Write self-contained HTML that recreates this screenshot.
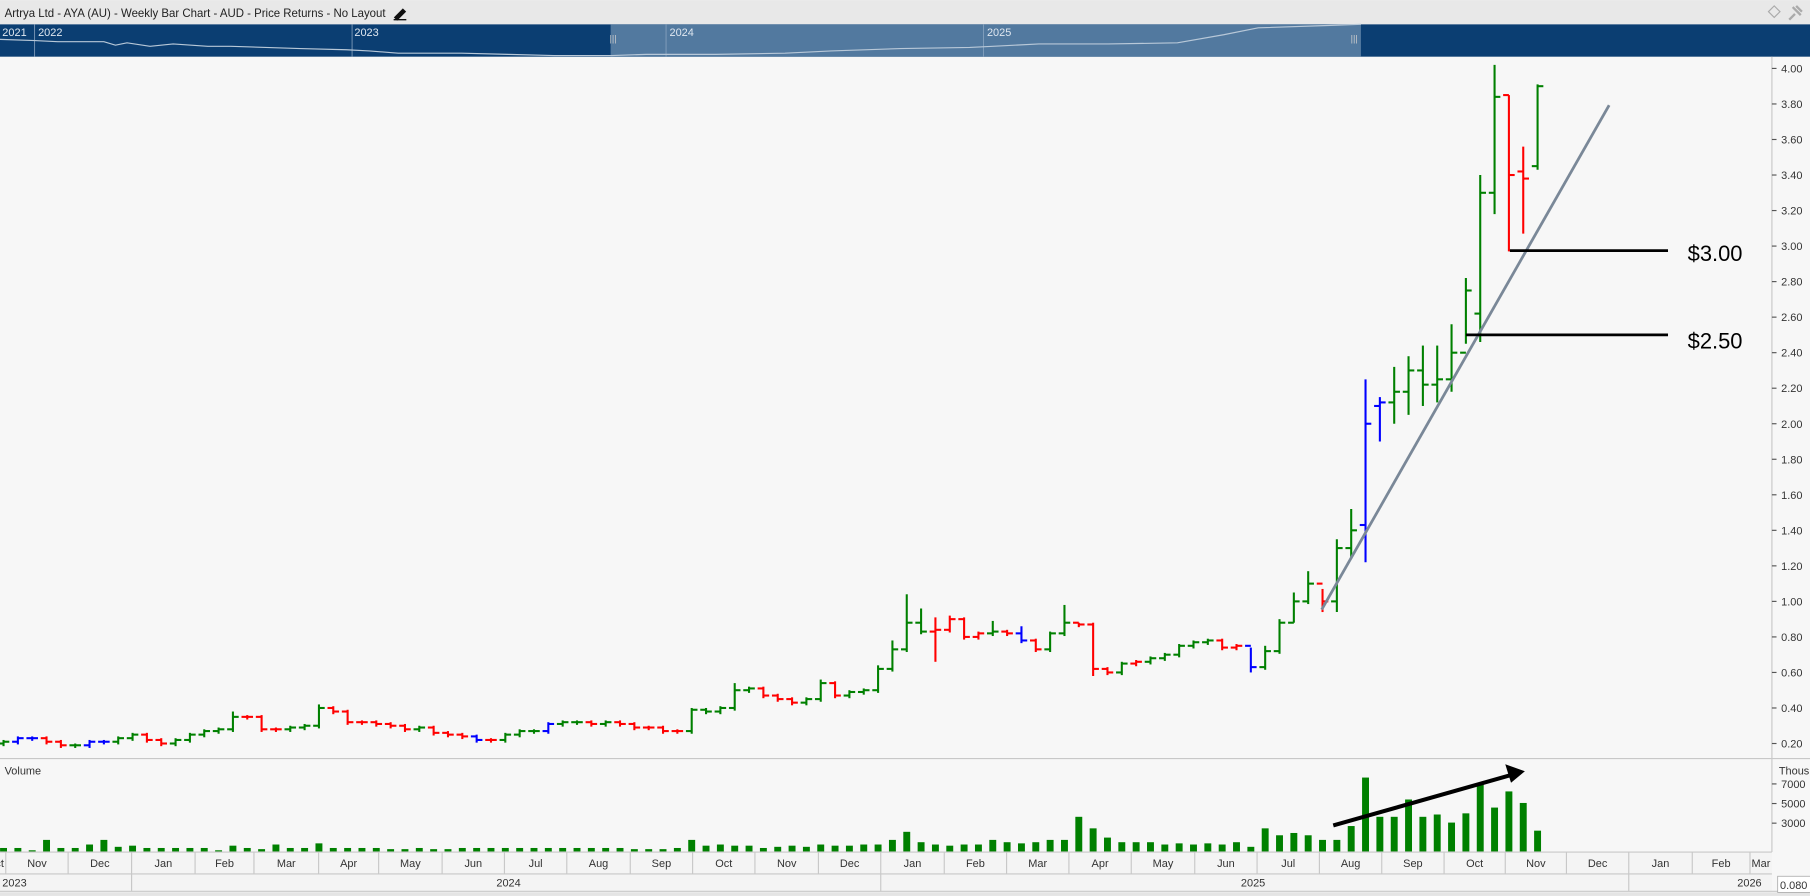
<!DOCTYPE html>
<html><head><meta charset="utf-8"><style>
html,body{margin:0;padding:0;background:#f7f7f7;overflow:hidden}
svg{display:block;font-family:"Liberation Sans",sans-serif}
</style></head><body>
<svg id="s" width="1810" height="896" viewBox="0 0 1568 776" xmlns="http://www.w3.org/2000/svg">
<rect x="0" y="0" width="1568" height="776" fill="#f7f7f7"/>
<rect x="0" y="0" width="1568" height="21" fill="#e8e8e8"/>
<text x="4" y="14.5" font-size="10.5" fill="#222" textLength="330" lengthAdjust="spacingAndGlyphs">Artrya Ltd - AYA (AU) - Weekly Bar Chart - AUD - Price Returns - No Layout</text>
<path d="M342 15 L349 8 L351 10 L344 17 Z M341 17 L352 17" stroke="#111" stroke-width="1.2" fill="#111"/>
<path d="M1537 5 L1542 10 L1537 15 L1532 10 Z" fill="none" stroke="#aaa"/>
<path d="M1553 6 L1560 13 M1556 5 L1561 10 M1555 12 L1550 17" stroke="#aaa" stroke-width="2"/>
<rect x="0" y="21" width="1568" height="28" fill="#0b3e72"/>
<rect x="529" y="21" width="650" height="28" fill="#52799f"/>
<g stroke="#8aa4c0" stroke-width="0.7"><line x1="30" y1="21" x2="30" y2="49"/><line x1="305" y1="21" x2="305" y2="49"/><line x1="577" y1="21" x2="577" y2="49"/><line x1="852" y1="21" x2="852" y2="49"/></g>
<g font-size="9.5" fill="#dfe7f0"><text x="2" y="31">2021</text><text x="33" y="31">2022</text><text x="307" y="31">2023</text><text x="580" y="31">2024</text><text x="855" y="31">2025</text></g>
<polyline fill="none" stroke="#b8c8d8" stroke-width="1" points="0,34 30,35 50,36 90,36 100,39 110,37 130,40 150,38 180,40 200,40 230,41 260,42 300,43 320,44 345,46 400,46 440,47 480,48 530,48 560,47 620,47 680,46 720,44 780,42 840,41 860,40 900,38 960,38 1020,37 1060,30 1090,24 1150,22 1179,21"/>
<text x="528" y="36" font-size="8" fill="#ccc">|||</text><text x="1170" y="36" font-size="8" fill="#ccc">|||</text>
<line x1="1535" y1="49" x2="1535" y2="738" stroke="#c8c8c8" stroke-width="1"/>
<line x1="0" y1="657" x2="1568" y2="657" stroke="#c8c8c8" stroke-width="1"/>
<text x="4" y="671" font-size="9.5" fill="#333">Volume</text>
<g id="ax" font-size="9.5" fill="#333"></g>
<g id="bars"></g>
<g id="vol" fill="#008000"></g>
<line x1="1145" y1="528" x2="1394" y2="91" stroke="#7a8898" stroke-width="2.4"/>
<line x1="1308" y1="217" x2="1445" y2="217" stroke="#000" stroke-width="2.4"/>
<line x1="1270" y1="290" x2="1445" y2="290" stroke="#000" stroke-width="2.4"/>
<text x="1462" y="226" font-size="19" fill="#000">$3.00</text>
<text x="1462" y="302" font-size="19" fill="#000">$2.50</text>
<line x1="1155" y1="715" x2="1310" y2="671" stroke="#000" stroke-width="3.5"/>
<path d="M1321 668 L1304 662 L1309 678 Z" fill="#000"/>
<rect x="0" y="738" width="1535" height="38" fill="#f4f4f4"/>
<line x1="0" y1="738" x2="1535" y2="738" stroke="#c8c8c8"/>
<line x1="0" y1="757" x2="1535" y2="757" stroke="#c8c8c8"/>
<line x1="0" y1="772" x2="1568" y2="772" stroke="#c8c8c8"/>
<rect x="0" y="773" width="1568" height="3" fill="#e4e4e4"/>
<g id="tx" font-size="9.5" fill="#333"></g>
<rect x="1540" y="759" width="30" height="14" fill="#fff" stroke="#aaa" stroke-width="0.7"/>
<text x="1542" y="770" font-size="9.5" fill="#333">0.080</text>
</svg>
<script>
var NS="http://www.w3.org/2000/svg";
function el(p,t,a,txt){var e=document.createElementNS(NS,t);for(var k in a)e.setAttribute(k,a[k]);if(txt!=null)e.textContent=txt;p.appendChild(e);return e;}
function Y(p){return 644-(p-0.2)*153.9;}
var ax=document.getElementById('ax');
for(var i=0;i<=19;i++){var p=0.2+i*0.2;var y=Y(p);el(ax,'line',{x1:1535,y1:y,x2:1539,y2:y,stroke:'#555','stroke-width':1});el(ax,'text',{x:1543,y:y+3.5},p.toFixed(2));}
el(ax,'text',{x:1541,y:671},'Thous');
[[7000,679],[5000,696],[3000,713]].forEach(function(a){el(ax,'line',{x1:1535,y1:a[1],x2:1539,y2:a[1],stroke:'#555'});el(ax,'text',{x:1543,y:a[1]+3.5},a[0]);});
var D=[[.20,'g'],[.21,'g'],[.23,'b'],[.23,'b'],[.21,'r'],[.19,'r'],[.19,'g'],[.21,'b'],[.21,'b'],[.23,'g'],[.25,'g'],[.22,'r'],[.20,'r'],[.22,'g'],[.25,'g'],[.27,'g'],[.28,'g'],[.35,'g',.38],[.35,'r'],[.28,'r'],[.28,'r'],[.29,'g'],[.30,'g'],[.40,'g',.42],[.38,'r'],[.32,'r'],[.32,'r'],[.31,'r'],[.30,'r'],[.28,'r'],[.29,'g'],[.26,'r'],[.25,'r'],[.24,'r'],[.22,'b'],[.22,'r'],[.25,'g'],[.27,'g'],[.27,'g'],[.31,'b'],[.32,'g'],[.32,'g'],[.31,'r'],[.32,'g'],[.31,'r'],[.29,'r'],[.29,'r'],[.27,'r'],[.27,'r'],[.39,'g',.40],[.38,'g'],[.40,'g'],[.50,'g',.54],[.51,'g'],[.47,'r'],[.45,'r'],[.43,'r'],[.45,'g'],[.54,'g',.56],[.47,'r'],[.49,'g'],[.50,'g'],[.62,'g',.64],[.73,'g',.78],[.88,'g',1.04],[.83,'g',.96],[.84,'r',.91,.66],[.90,'r',.92],[.80,'r'],[.82,'r'],[.83,'g',.89],[.82,'r'],[.78,'b',.86],[.73,'r'],[.82,'g'],[.88,'g',.98],[.87,'r',.88],[.62,'r',.88,.58],[.60,'r'],[.65,'g'],[.66,'r'],[.68,'g'],[.70,'g'],[.75,'g'],[.77,'g'],[.78,'g'],[.74,'r'],[.75,'r'],[.63,'b',.74,.60],[.72,'g',.75],[.88,'g',.90],[1.00,'g',1.05,.88],[1.10,'g',1.17],[1.00,'r',1.07,.94],[1.30,'g',1.35,.94],[1.40,'g',1.52,1.24],[2.00,'b',2.25,1.22,1.43],[2.12,'b',2.15,1.90,2.10],[2.18,'g',2.32,2.00],[2.30,'g',2.38,2.05],[2.22,'g',2.44,2.10],[2.25,'g',2.44,2.12],[2.40,'g',2.56,2.18],[2.75,'g',2.82,2.45,2.40],[3.30,'g',3.40,2.46,2.62],[3.84,'g',4.02,3.18,3.30],[3.40,'r',3.85,2.97,3.85],[3.38,'r',3.56,3.07,3.42],[3.90,'g',3.91,3.43,3.45]];
var C={g:'#008000',r:'#ff0000',b:'#0000ff'};
var n=D.length,step=12.42,bars=document.getElementById('bars');
var prev=0.2;
for(var i=0;i<n;i++){var d=D[i];var x=1332-(n-1-i)*step;var c=d[0],o=d[4]!=null?d[4]:prev;
var h=d[2]!=null?d[2]:Math.max(o,c)+0.01;var l=d[3]!=null?d[3]:Math.min(o,c)-0.015;
var col=C[d[1]];
el(bars,'line',{x1:x,y1:Y(h),x2:x,y2:Y(l),stroke:col,'stroke-width':1.8});
el(bars,'line',{x1:x-5,y1:Y(o),x2:x,y2:Y(o),stroke:col,'stroke-width':1.8});
el(bars,'line',{x1:x,y1:Y(c),x2:x+5,y2:Y(c),stroke:col,'stroke-width':1.8});
prev=c;}
var V=[2,3,3,1,10,3,3,6,10,4,5,3,3,3,3,3,1,5,3,2,6,3,3,7,3,3,3,3,2,2,3,2,2,3,3,3,3,3,3,3,3,3,3,3,3,2,2,2,3,10,5,6,5,5,3,4,5,4,6,5,5,6,6,10,17,8,6,5,6,6,10,8,7,8,10,10,30,20,12,8,8,8,6,7,6,7,6,8,4,20,14,16,14,10,10,22,64,30,30,45,30,32,25,33,58,38,52,42,18];
var vol=document.getElementById('vol');
var off=V.length-n;
for(var i=0;i<n;i++){var h=V[i+off];var x=1332-(n-1-i)*step;el(vol,'rect',{x:x-3,y:737.5-h,width:6,height:h});}
var tx=document.getElementById('tx');
var seps=[5,59,114,169,220,276,328,383,437,491,546,600,654,709,763,818,872,926,980,1035,1089,1143,1197,1251,1304,1357,1411,1466,1516,1535];
var names=['Nov','Dec','Jan','Feb','Mar','Apr','May','Jun','Jul','Aug','Sep','Oct','Nov','Dec','Jan','Feb','Mar','Apr','May','Jun','Jul','Aug','Sep','Oct','Nov','Dec','Jan','Feb','Mar'];
el(tx,'text',{x:-4,y:751},'ct');
for(var i=0;i<seps.length;i++){var s=seps[i];if(i<seps.length-1)el(tx,'line',{x1:s,y1:738,x2:s,y2:757,stroke:'#c8c8c8'});
if(i<names.length){var e=seps[i+1];el(tx,'text',{x:(s+e)/2,y:751,'text-anchor':'middle'},names[i]);}}
[114,763,1411].forEach(function(s){el(tx,'line',{x1:s,y1:757,x2:s,y2:772,stroke:'#c8c8c8'});});
el(tx,'text',{x:2,y:768},'2023');el(tx,'text',{x:430,y:768},'2024');el(tx,'text',{x:1075,y:768},'2025');el(tx,'text',{x:1505,y:768},'2026');
</script>
</body></html>
